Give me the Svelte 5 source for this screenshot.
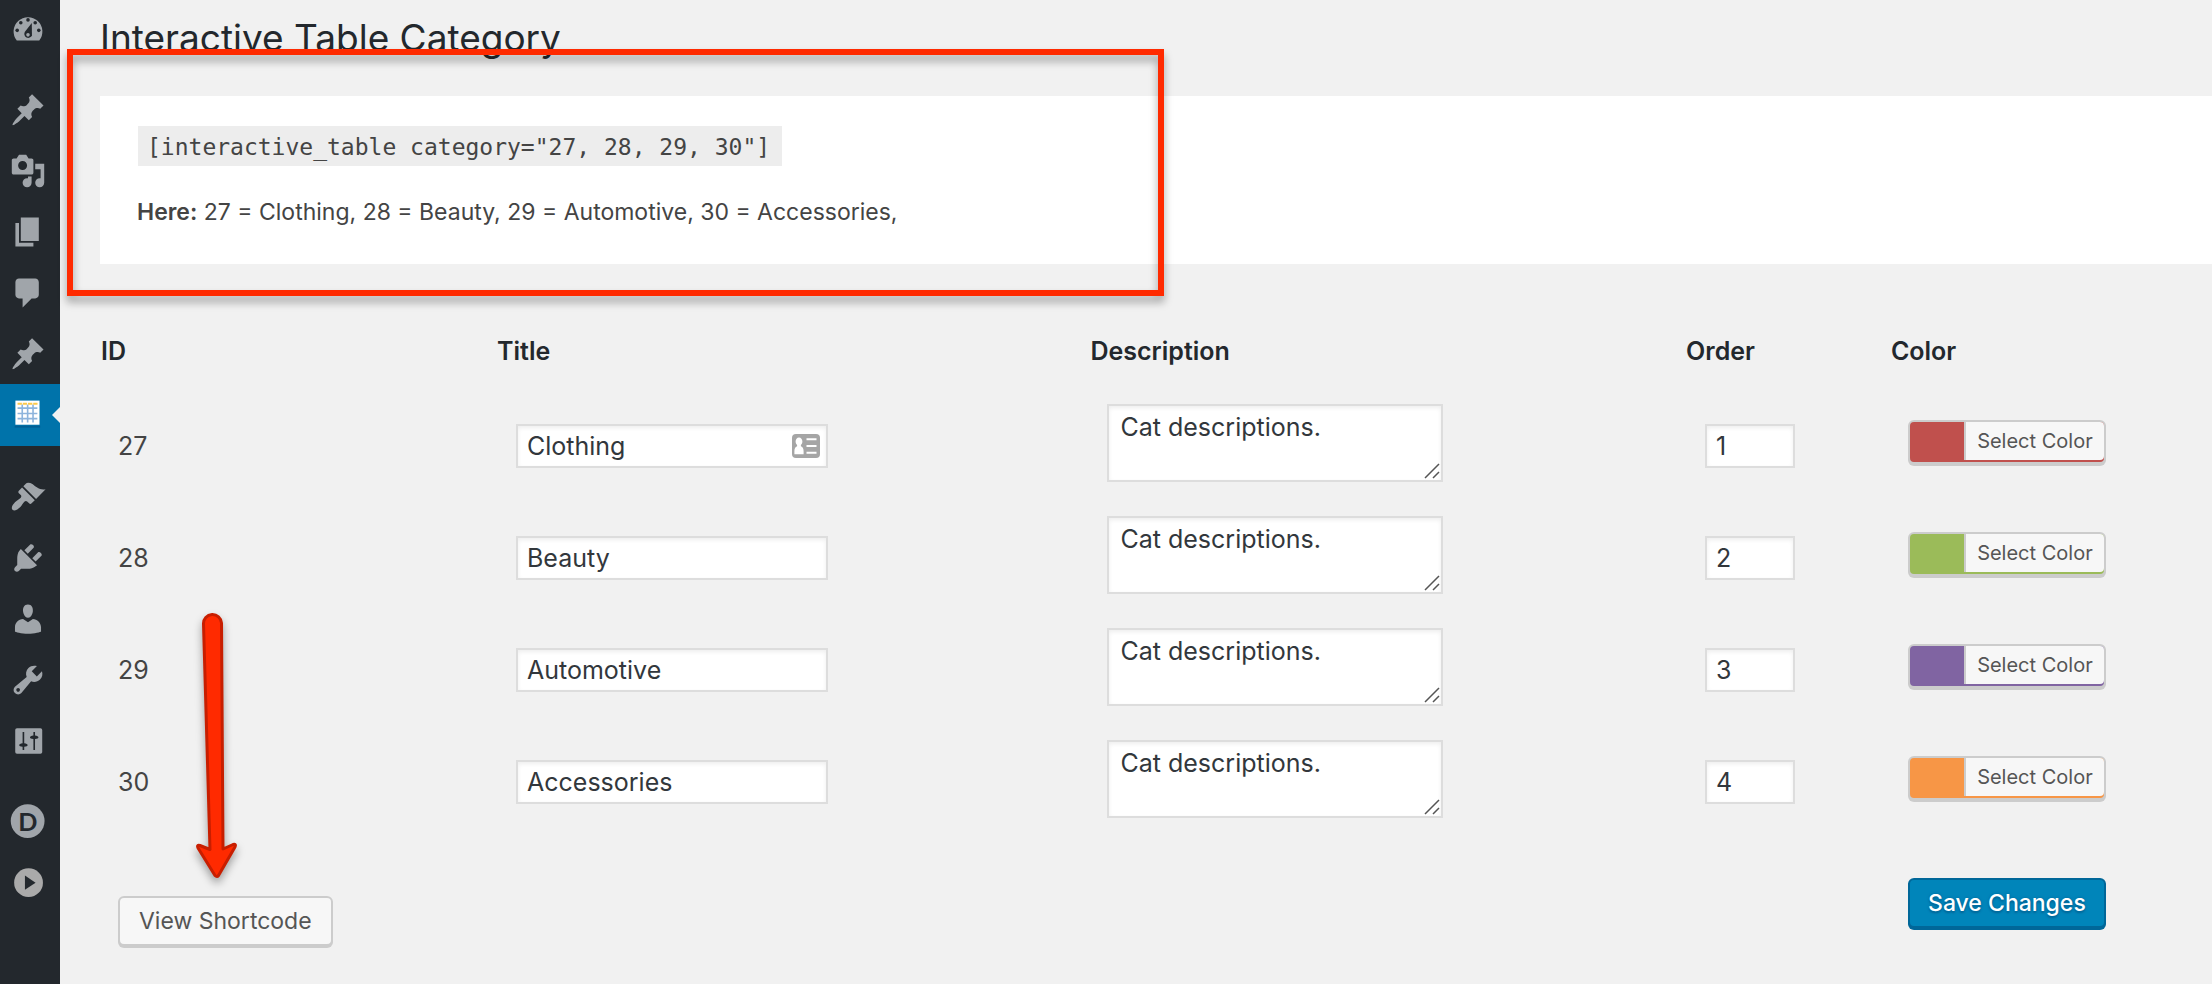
<script>
  const rows = $state([
    { id: 27, title: 'Clothing', description: 'Cat descriptions.', order: '1', color: '#c0504d', card: true },
    { id: 28, title: 'Beauty', description: 'Cat descriptions.', order: '2', color: '#9bbb59' },
    { id: 29, title: 'Automotive', description: 'Cat descriptions.', order: '3', color: '#8064a2' },
    { id: 30, title: 'Accessories', description: 'Cat descriptions.', order: '4', color: '#f79646' }
  ]);

  const pin = 'M10.44 3.02l1.82-1.82 6.36 6.35-1.83 1.82c-1.05-.68-2.48-.57-3.41.36l-.75.75c-.92.93-1.04 2.35-.35 3.41l-1.83 1.82-2.41-2.41-2.8 2.79c-.42.42-3.38 2.71-3.8 2.29s1.86-3.39 2.28-3.81l2.79-2.79L4.1 9.36l1.83-1.82c1.05.69 2.48.57 3.4-.36l.75-.75c.93-.92 1.05-2.35.36-3.41z';

  // Each group is set off from the next by a gap in the menu.
  const groups = [
    [{ label: 'Dashboard', kind: 'dashboard' }],
    [
      { label: 'Posts', d: pin },
      { label: 'Media', d: 'M13 11V4c0-.55-.45-1-1-1h-1.67L9 1H5L3.67 3H2c-.55 0-1 .45-1 1v7c0 .55.45 1 1 1h10c.55 0 1-.45 1-1zM7 4.5c1.38 0 2.5 1.12 2.5 2.5S8.38 9.5 7 9.5 4.5 8.38 4.5 7 5.62 4.5 7 4.5zM14 6h5v10.5c0 1.38-1.12 2.5-2.5 2.5S14 17.88 14 16.5s1.12-2.5 2.5-2.5c.17 0 .34.02.5.05V9h-3V6zm-4 8.05V13h2v3.5c0 1.38-1.12 2.5-2.5 2.5S7 17.88 7 16.5 8.12 14 9.5 14c.17 0 .34.02.5.05z' },
      { label: 'Pages', d: 'M6 15V2h10v13H6zm-1 1h8v2H3V5h2v11z' },
      { label: 'Comments', d: 'M5 2h9c1.1 0 2 .9 2 2v7c0 1.1-.9 2-2 2h-2l-5 5v-5H5c-1.1 0-2-.9-2-2V4c0-1.1.9-2 2-2z' },
      { label: 'Projects', d: pin },
      { label: 'Interactive Table', kind: 'table', active: true }
    ],
    [
      { label: 'Appearance', d: 'M14.48 11.06L7.41 3.99l1.5-1.5c.5-.56 2.3-.47 3.51.32 1.21.8 1.43 1.28 2.91 2.1 1.18.64 2.45 1.26 4.45.85zm-.71.71L6.7 4.7 4.93 6.47c-.39.39-.39 1.02 0 1.41l1.06 1.06c.39.39.39 1.03 0 1.42-.6.6-1.43 1.11-2.21 1.69-.35.26-.7.53-1.01.84C1.43 14.23.4 16.08 1.4 17.07c.99 1 2.84-.03 4.18-1.36.31-.31.58-.66.85-1.02.57-.78 1.08-1.61 1.69-2.21.39-.39 1.02-.39 1.41 0l1.06 1.06c.39.39 1.02.39 1.41 0z' },
      { label: 'Plugins', d: 'M13.11 4.36L9.87 7.6 8 5.73l3.24-3.24c.35-.34 1.05-.2 1.56.32.52.51.66 1.21.31 1.55zm-8 1.77l.91-1.12 9.01 9.01-1.19.84c-.71.71-2.63 1.16-3.82 1.16H6.14L4.9 17.26c-.59.59-1.54.59-2.12 0-.59-.58-.59-1.53 0-2.12l1.24-1.24v-3.88c0-1.13.4-3.19 1.09-3.89zm7.26 3.97l3.24-3.24c.34-.35 1.04-.21 1.55.31.52.51.66 1.21.31 1.55l-3.24 3.25z' },
      { label: 'Users', d: 'M10 9.25c-2.27 0-2.73-3.44-2.73-3.44C7 4.02 7.82 2 9.97 2c2.16 0 2.98 2.02 2.71 3.81 0 0-.41 3.44-2.68 3.44zm0 2.57L12.72 10c2.39 0 4.52 2.33 4.52 4.53v2.49s-3.65 1.13-7.24 1.13c-3.65 0-7.24-1.13-7.24-1.13v-2.49c0-2.25 1.94-4.48 4.47-4.48z' },
      { label: 'Tools', d: 'M16.68 9.77c-1.34 1.34-3.3 1.67-4.95.99l-5.41 6.52c-.99.99-2.59.99-3.58 0s-.99-2.59 0-3.57l6.52-5.42c-.68-1.65-.35-3.61.99-4.95 1.28-1.28 3.12-1.62 4.72-1.06l-2.89 2.89 2.82 2.82 2.86-2.87c.53 1.58.18 3.39-1.08 4.65zM3.81 16.21c.4.39 1.04.39 1.43 0 .4-.4.4-1.04 0-1.43-.39-.4-1.03-.4-1.43 0-.39.39-.39 1.03 0 1.43z' },
      { label: 'Settings', kind: 'settings' }
    ],
    [
      { label: 'Divi', kind: 'divi' },
      { label: 'Collapse menu', kind: 'play' }
    ]
  ];

  const legend = $derived(rows.map((r) => `${r.id} = ${r.title},`).join(' '));
  const shortcode = $derived(`[interactive_table category="${rows.map((r) => r.id).join(', ')}"]`);
</script>

<div class="page">
  <nav class="menu" aria-label="Main menu">
    {#each groups as group}
      <ul>
        {#each group as item}
          <li>
            <a href="#menu" class:active={item.active} aria-label={item.label}>
              <svg viewBox="0 0 20 20" aria-hidden="true">
                {#if item.kind === 'dashboard'}
                  <path d="M3.76 15.9h12.48A8 8 0 1 0 3.76 15.9z" />
                  <g class="ink">
                    <circle cx="10" cy="4.4" r="1" />
                    <circle cx="6" cy="6" r="1" />
                    <circle cx="14" cy="6" r="1" />
                    <circle cx="4" cy="10.2" r="1" />
                    <circle cx="16" cy="10.2" r="1" />
                    <path d="M12.1 6.1l.1 6.9a2.2 2.2 0 1 1-3.9-2z" />
                  </g>
                  <circle cx="10" cy="12.7" r="1" />
                {:else if item.kind === 'table'}
                  <rect x="3" y="2" width="13.4" height="13.4" fill="#fff" />
                  <path d="M4.2 6.2h11M4.2 9.2h11M4.2 12h11M6.8 4.2v10M9.8 4.2v10M12.8 4.2v10" stroke="#8db4dc" stroke-width=".9" fill="none" />
                  <path d="M4.2 3.8h11.1" stroke="#fbc94a" stroke-width="1.1" stroke-dasharray="2.4 .5" />
                  <rect x="2.6" y="16" width="14.2" height="1" fill="#005f94" />
                {:else if item.kind === 'settings'}
                  <rect x="2.9" y="2.9" width="15" height="14.2" rx="1" />
                  <g class="ink">
                    <path d="M7 5h.9v6.2c1.2.1 1.9.5 1.9 1s-.7.9-1.9 1V15H7v-1.800c-1.200-.1-1.900-.5-1.900-1s.7-.9 1.900-1zM13 5h.9v1.900c1.200.1 1.900.5 1.900 1s-.7.9-1.900 1V15H13V8.900c-1.200-.1-1.900-.5-1.900-1s.7-.9 1.900-1z" />
                  </g>
                {:else if item.kind === 'divi'}
                  <circle cx="9.800" cy="9.500" r="9.400" />
                  <text x="9.900" y="14.800" text-anchor="middle" class="ink letter">D</text>
                {:else if item.kind === 'play'}
                  <circle cx="10.300" cy="9.800" r="8" fill="#aaa" />
                  <path class="ink" d="M8.300 5.800v8l5.900-4z" />
                {:else}
                  <path d={item.d} fill-rule="evenodd" />
                {/if}
              </svg>
            </a>
          </li>
        {/each}
      </ul>
    {/each}
  </nav>

  <main>
    <h1>Interactive Table Category</h1>

    <section class="panel">
      <code>{shortcode}</code>
      <p><strong>Here:</strong> {legend}</p>
    </section>

    <table>
      <colgroup>
        <col class="c-id" /><col class="c-title" /><col class="c-description" /><col class="c-order" /><col />
      </colgroup>
      <thead>
        <tr>
          <th scope="col">ID</th>
          <th scope="col">Title</th>
          <th scope="col">Description</th>
          <th scope="col">Order</th>
          <th scope="col">Color</th>
        </tr>
      </thead>
      <tbody>
        {#each rows as row}
          <tr>
            <td class="low">{row.id}</td>
            <td class="low inset">
              <div class="field title">
                <input type="text" aria-label="Title {row.id}" bind:value={row.title} />
                {#if row.card}
                  <svg class="card" viewBox="0 0 28 24" aria-hidden="true">
                    <rect width="28" height="24" rx="4" fill="#a5a5a5" />
                    <path d="M7 3.500c2 0 3.400 1.700 3.400 4 0 1.500-.6 2.800-1.500 3.500v1.300c1.900.8 2.700 2.300 2.700 5v3H2.400v-3c0-2.700.8-4.200 2.700-5V11c-.9-.7-1.500-2-1.500-3.500 0-2.300 1.400-4 3.400-4zM14.500 4.200h10v2h-10zM14.500 11h10v2h-10zM14.500 17.700h10v2h-10z" fill="#fff" />
                  </svg>
                {/if}
              </div>
            </td>
            <td>
              <div class="field description">
                <textarea aria-label="Description {row.id}" bind:value={row.description}></textarea>
                <svg class="grip" viewBox="0 0 16 16" aria-hidden="true">
                  <path d="M1 15L15 1M9 15l6-6" stroke="#555" stroke-width="1.500" fill="none" />
                </svg>
              </div>
            </td>
            <td class="low inset">
              <div class="field order">
                <input type="text" aria-label="Order {row.id}" bind:value={row.order} />
              </div>
            </td>
            <td>
              <button type="button" class="color" style:background-color={row.color}>
                <span>Select Color</span>
              </button>
            </td>
          </tr>
        {/each}
      </tbody>
      <tfoot>
        <tr>
          <td class="view" colspan="4"><button type="button" class="button">View Shortcode</button></td>
          <td class="save"><button type="submit" class="button primary">Save Changes</button></td>
        </tr>
      </tfoot>
    </table>
  </main>

  <div class="highlight"></div>
  <svg class="arrow" viewBox="0 0 60 280" aria-hidden="true">
    <path d="M13.500 18A9 9 0 0 1 31.500 17L33 243L43 238.500Q46.500 237.500 45 241L28.500 269.500Q27 271.500 25 269.500L8 242Q6.500 238.500 10 239.500L20 243.500Z" fill="#ff2a00" stroke="#c81e00" stroke-width="3" stroke-linejoin="round" />
  </svg>
</div>

<style>
  :global(body) {
    margin: 0;
    background: #f1f1f1;
  }

  .page {
    position: relative;
    display: flex;
    min-height: 100vh;
    overflow: hidden;
    color: #444;
    font-family: Inter, sans-serif;
    font-size: 25px;
    line-height: 32px;
  }

  .menu {
    flex: none;
    display: flex;
    flex-direction: column;
    gap: 20px;
    box-sizing: border-box;
    width: 60px;
    background: #23282d;
  }

  .menu ul {
    margin: 0;
    padding: 0;
    list-style: none;
  }

  .menu a {
    position: relative;
    display: flex;
    align-items: center;
    box-sizing: border-box;
    height: 61px;
    padding-left: 10px;
  }

  .menu ul:first-child a {
    height: 59px;
  }

  .menu a svg {
    width: 36px;
    height: 36px;
    overflow: visible;
    fill: #a0a5aa;
  }

  .menu .ink {
    fill: #23282d;
  }

  .letter {
    font-family: Lato, sans-serif;
    font-size: 14px;
    font-weight: 700;
  }

  .menu a.active {
    height: 62px;
    background: #0073aa;
  }

  .menu a.active::after {
    content: '';
    position: absolute;
    top: 23px;
    right: 0;
    border: 8px solid transparent;
    border-left: 0;
    border-right-color: #f1f1f1;
  }

  main {
    flex: 1;
    min-width: 0;
    padding: 18px 0 24px 40px;
  }

  h1 {
    margin: 0 0 38px;
    color: #23282d;
    font-size: 37px;
    font-weight: 400;
    line-height: 40px;
  }

  .panel {
    padding: 30px 37px 36px;
    background: #fff;
  }

  code {
    display: inline-block;
    padding: 2px 12px 0;
    padding-left: 9px;
    margin-left: 1px;
    background: #ededed;
    font-family: 'DejaVu Sans Mono', monospace;
    font-size: 23px;
    line-height: 38px;
    vertical-align: top;
  }

  .panel p {
    margin: 30px 0 0;
    font-size: 23px;
  }

  strong,
  th {
    font-weight: 600;
  }

  table {
    width: 100%;
    margin-top: 71px;
    border-collapse: collapse;
    table-layout: fixed;
  }

  .c-id {
    width: 18.75%;
  }

  .c-title {
    width: 28.1%;
  }

  .c-description {
    width: 28.2%;
  }

  .c-order {
    width: 9.7%;
  }

  th {
    padding: 0 0 20px 1px;
    color: #23282d;
    text-align: left;
  }

  td {
    height: 78px;
    padding: 16px 0 18px 18px;
    vertical-align: middle;
  }

  td.low {
    padding-top: 20px;
    padding-bottom: 14px;
  }

  td.inset {
    padding-left: 20px;
  }

  .field {
    position: relative;
    max-width: 100%;
  }

  .title {
    width: 312px;
  }

  .description {
    width: 336px;
    padding-top: 1px;
    margin-bottom: -1px;
  }

  .order {
    width: 90px;
  }

  input,
  textarea {
    display: block;
    box-sizing: border-box;
    width: 100%;
    height: 44px;
    margin: 0;
    padding: 0 9px 1px;
    border: 2px solid #ddd;
    border-radius: 0;
    background: #fff;
    box-shadow: inset 0 2px 4px rgba(0, 0, 0, 0.07);
    color: #32373c;
    font: inherit;
  }

  textarea {
    height: 78px;
    padding: 5px 11px;
    overflow: hidden;
    resize: none;
  }

  .card {
    position: absolute;
    top: 10px;
    right: 8px;
    width: 28px;
    height: 24px;
  }

  .grip {
    position: absolute;
    right: 3px;
    bottom: 3px;
    width: 16px;
    height: 16px;
  }

  button {
    box-sizing: border-box;
    border: 2px solid #ccc;
    border-radius: 6px;
    box-shadow: 0 2px 0 #ccc;
    background: #f7f7f7;
    color: #555;
    font-family: inherit;
    cursor: pointer;
  }

  .color {
    display: block;
    width: 198px;
    padding: 0 0 2px 54px;
    font-size: 20px;
    line-height: 38px;
  }

  .color span {
    display: block;
    border-left: 2px solid #ccc;
    border-radius: 0 4px 4px 0;
    background: #f7f7f7;
  }

  .button {
    display: block;
    min-width: 198px;
    height: 50px;
    padding: 0 19px;
    font-size: 23px;
    line-height: 46px;
    white-space: nowrap;
  }

  .primary {
    padding: 0;
    border-color: #006799;
    box-shadow: 0 2px 0 #006799;
    background: #0085ba;
    color: #fff;
    font-weight: 500;
    text-shadow: 0 2px 2px #006799, 0 0 3px #006799;
  }

  .view,
  .save {
    padding-bottom: 0;
    vertical-align: top;
  }

  .view {
    padding-top: 61px;
  }

  .save {
    padding-top: 43px;
  }

  /* Callouts drawn over the page */
  .highlight {
    position: absolute;
    top: 49px;
    left: 67px;
    box-sizing: border-box;
    width: 1097px;
    height: 247px;
    border: 6px solid #ff2a00;
    filter: drop-shadow(0 6px 4px rgba(0, 0, 0, 0.35));
    pointer-events: none;
  }

  .arrow {
    position: absolute;
    top: 606px;
    left: 190px;
    width: 60px;
    height: 280px;
    filter: drop-shadow(0 5px 4px rgba(0, 0, 0, 0.35));
    pointer-events: none;
  }
</style>
